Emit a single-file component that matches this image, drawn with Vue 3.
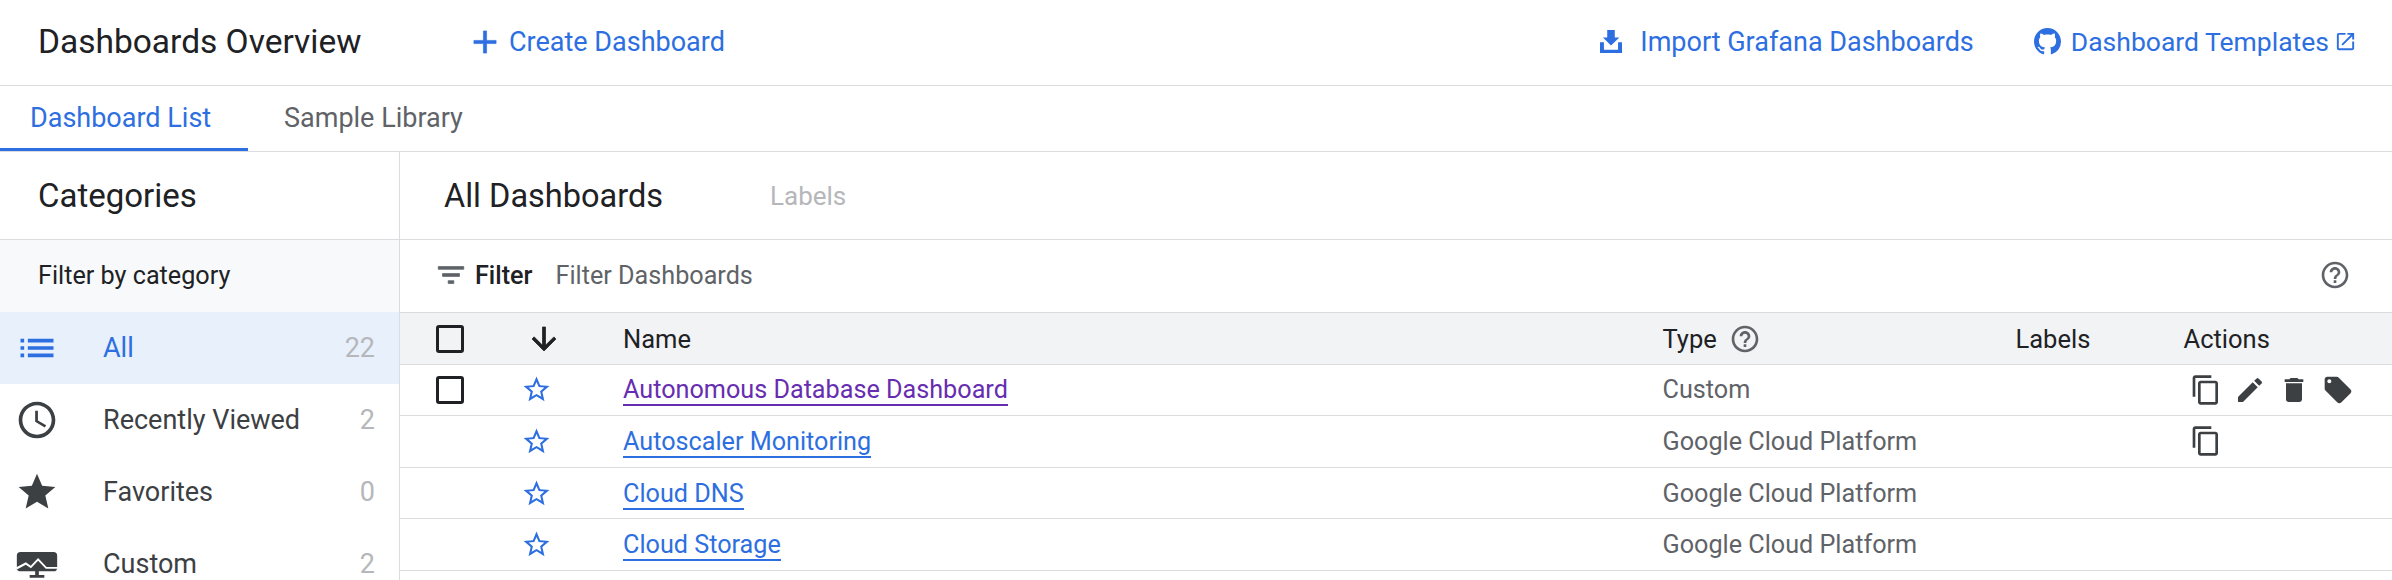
<template>
  <div class="page">
    <header class="top-bar">
      <h1 class="page-title">Dashboards Overview</h1>
      <a class="top-link create-link">
        <svg class="icon-plus" viewBox="0 0 24 24"><path d="M19 13h-6v6h-2v-6H5v-2h6V5h2v6h6v2z" /></svg>
        Create Dashboard
      </a>
      <a class="top-link import-link">
        <svg class="icon-import" viewBox="0 0 67 70"><path d="M0 37H12V60H55V37H67V70H0zM22 0H45V23H59L33.5 47 9 23H22z" /></svg>
        Import Grafana Dashboards
      </a>
      <a class="top-link templates-link">
        <svg class="icon-github" viewBox="0 0 16 16"><path d="M8 0C3.58 0 0 3.58 0 8c0 3.54 2.29 6.53 5.47 7.59.4.07.55-.17.55-.38 0-.19-.01-.82-.01-1.49-2.01.37-2.53-.49-2.69-.94-.09-.23-.48-.94-.82-1.13-.28-.15-.68-.52-.01-.53.63-.01 1.08.58 1.23.82.72 1.21 1.87.87 2.33.66.07-.52.28-.87.51-1.07-1.78-.2-3.64-.89-3.64-3.95 0-.87.31-1.59.82-2.15-.08-.2-.36-1.02.08-2.12 0 0 .67-.21 2.2.82.64-.18 1.32-.27 2-.27s1.36.09 2 .27c1.53-1.04 2.2-.82 2.2-.82.44 1.1.16 1.92.08 2.12.51.56.82 1.27.82 2.15 0 3.07-1.87 3.75-3.65 3.95.29.25.54.73.54 1.48 0 1.07-.01 1.93-.01 2.2 0 .21.15.46.55.38A8.01 8.01 0 0 0 16 8c0-4.42-3.58-8-8-8z" /></svg>
        Dashboard Templates
        <svg class="icon-external" viewBox="0 0 24 24"><path d="M19 19H5V5h7V3H5a2 2 0 0 0-2 2v14a2 2 0 0 0 2 2h14c1.1 0 2-.9 2-2v-7h-2v7zM14 3v2h3.59l-9.83 9.83 1.41 1.41L19 6.41V10h2V3h-7z" /></svg>
      </a>
    </header>

    <nav class="tabs">
      <div class="tab active">Dashboard List</div>
      <div class="tab">Sample Library</div>
    </nav>

    <div class="content">
      <aside class="sidebar">
        <div class="section-head"><h2>Categories</h2></div>
        <div class="filter-label">Filter by category</div>
        <div
          v-for="cat in categories"
          :key="cat.name"
          class="cat-item"
          :class="{ active: cat.active }"
        >
          <svg class="cat-icon" viewBox="0 0 24 24"><path :d="cat.icon" fill-rule="evenodd" /></svg>
          <span class="cat-name">{{ cat.name }}</span>
          <span class="cat-count">{{ cat.count }}</span>
        </div>
      </aside>

      <main class="main">
        <div class="section-head main-head">
          <h2>All Dashboards</h2>
          <span class="labels-tab">Labels</span>
        </div>

        <div class="filter-bar">
          <svg class="icon-filter" viewBox="0 0 24 24"><path d="M10 18h4v-2h-4v2zM3 6v2h18V6H3zm3 7h12v-2H6v2z" /></svg>
          <span class="filter-word">Filter</span>
          <span class="filter-placeholder">Filter Dashboards</span>
          <svg class="icon-help" viewBox="0 0 24 24"><path :d="helpPath" /></svg>
        </div>

        <div class="row head-row">
          <span class="check"></span>
          <svg class="icon-arrow" viewBox="0 0 24 24"><path d="M20 12l-1.41-1.41L13 16.17V4h-2v12.17l-5.58-5.59L4 12l8 8 8-8z" /></svg>
          <span class="col-name">Name</span>
          <span class="col-type">Type <svg class="icon-help small" viewBox="0 0 24 24"><path :d="helpPath" /></svg></span>
          <span class="col-labels">Labels</span>
          <span class="col-actions">Actions</span>
        </div>

        <div v-for="row in rows" :key="row.name" class="row">
          <span class="check" :class="{ hidden: !row.checkable }"></span>
          <svg class="icon-star" viewBox="0 0 24 24"><path d="M22 9.24l-7.19-.62L12 2 9.19 8.63 2 9.24l5.46 4.73L5.82 21 12 17.27 18.18 21l-1.63-7.03L22 9.24zM12 15.4l-3.76 2.27 1-4.28-3.32-2.88 4.38-.38L12 6.1l1.71 4.04 4.38.38-3.32 2.88 1 4.28L12 15.4z" /></svg>
          <span class="col-name"><a class="dash-link" :class="{ visited: row.visited }">{{ row.name }}</a></span>
          <span class="col-type type-text">{{ row.type }}</span>
          <span class="col-labels"></span>
          <span class="col-actions action-icons">
            <svg v-for="a in row.actions" :key="a" class="icon-action" viewBox="0 0 24 24"><path :d="actionPaths[a]" /></svg>
          </span>
        </div>
      </main>
    </div>
  </div>
</template>

<script setup>
const helpPath =
  'M11 18h2v-2h-2v2zm1-16C6.48 2 2 6.48 2 12s4.48 10 10 10 10-4.48 10-10S17.52 2 12 2zm0 18c-4.41 0-8-3.59-8-8s3.59-8 8-8 8 3.59 8 8-3.59 8-8 8zm0-14c-2.21 0-4 1.79-4 4h2c0-1.1.9-2 2-2s2 .9 2 2c0 2-3 1.75-3 5h2c0-2.25 3-2.5 3-5 0-2.21-1.79-4-4-4z'

const categories = [
  {
    name: 'All',
    count: 22,
    active: true,
    icon: 'M3 13h2v-2H3v2zm0 4h2v-2H3v2zm0-8h2V7H3v2zm4 4h14v-2H7v2zm0 4h14v-2H7v2zM7 7v2h14V7H7z'
  },
  {
    name: 'Recently Viewed',
    count: 2,
    icon: 'M11.99 2C6.47 2 2 6.48 2 12s4.47 10 9.99 10C17.52 22 22 17.52 22 12S17.52 2 11.99 2zM12 20c-4.42 0-8-3.58-8-8s3.58-8 8-8 8 3.58 8 8-3.58 8-8 8zm.5-13H11v6l5.25 3.15.75-1.23-4.5-2.67V7z'
  },
  {
    name: 'Favorites',
    count: 0,
    icon: 'M12 17.27L18.18 21l-1.64-7.03L22 9.24l-7.19-.61L12 2 9.19 8.63 2 9.24l5.46 4.73L5.82 21z'
  },
  {
    name: 'Custom',
    count: 2,
    // monitor with a chart line cut out of the screen
    icon: 'M3 5.4h18a2 2 0 0 1 2 2V14a2 2 0 0 1-2 2h-8v2h3v1.5H8V18h3v-2H3a2 2 0 0 1-2-2V7.4a2 2 0 0 1 2-2zM1 13.6 5.9 11l2.7 1.9 4-4.2 4.6 4.9H23v1h-6.2l-4.2-4.4-3.9 4.1-2.8-1.9L1 15z'
  }
]

const actionPaths = {
  copy: 'M16 1H4c-1.1 0-2 .9-2 2v14h2V3h12V1zm3 4H8c-1.1 0-2 .9-2 2v14c0 1.1.9 2 2 2h11c1.1 0 2-.9 2-2V7c0-1.1-.9-2-2-2zm0 16H8V7h11v14z',
  edit: 'M3 17.25V21h3.75L17.81 9.94l-3.75-3.75L3 17.25zM20.71 7.04c.39-.39.39-1.02 0-1.41l-2.34-2.34a.9959.9959 0 0 0-1.41 0l-1.83 1.83 3.75 3.75 1.83-1.83z',
  trash: 'M6 19c0 1.1.9 2 2 2h8c1.1 0 2-.9 2-2V7H6v12zM19 4h-3.5l-1-1h-5l-1 1H5v2h14V4z',
  tag: 'M21.41 11.58l-9-9C12.05 2.22 11.55 2 11 2H4c-1.1 0-2 .9-2 2v7c0 .55.22 1.05.59 1.42l9 9c.36.36.86.58 1.41.58s1.05-.22 1.41-.59l7-7c.37-.36.59-.86.59-1.41s-.23-1.06-.59-1.42zM5.5 7C4.67 7 4 6.33 4 5.5S4.67 4 5.5 4 7 4.67 7 5.5 6.33 7 5.5 7z'
}

const rows = [
  { name: 'Autonomous Database Dashboard', type: 'Custom', checkable: true, visited: true, actions: ['copy', 'edit', 'trash', 'tag'] },
  { name: 'Autoscaler Monitoring', type: 'Google Cloud Platform', actions: ['copy'] },
  { name: 'Cloud DNS', type: 'Google Cloud Platform', actions: [] },
  { name: 'Cloud Storage', type: 'Google Cloud Platform', actions: [] }
]
</script>

<style>
html, body {
  margin: 0;
  background: #fff;
  overflow: hidden;
}
</style>

<style scoped>
.page {
  width: 2392px;
  height: 580px;
  overflow: hidden;
  font-family: Roboto, "Liberation Sans", sans-serif;
  color: #202124;
  background: #fff;
}

.top-bar {
  height: 85px;
  box-sizing: content-box;
  display: flex;
  align-items: center;
  padding: 0 35px 0 38px;
  border-bottom: 1px solid #dadce0;
}

.page-title {
  margin: 0 0 2px;
  width: 428px;
  font-size: 33.5px;
  font-weight: 400;
}

.top-link {
  display: flex;
  align-items: center;
  margin-bottom: 2px;
  font-size: 27px;
  color: #2d6fe0;
  white-space: nowrap;
}

.top-link svg { fill: #2d6fe0; }

.create-link { margin-right: auto; gap: 5px; }
.icon-plus { width: 38px; height: 38px; stroke: #2d6fe0; stroke-width: 0.4; }
.import-link { gap: 18px; margin-right: 60px; }
.icon-import { width: 22px; height: 23px; }
.templates-link { gap: 10px; font-size: 26.5px; }
.icon-github { width: 27px; height: 27px; }
.icon-external { width: 23px; height: 23px; margin-left: -5px; }

.tabs {
  height: 65px;
  display: flex;
  border-bottom: 1px solid #dadce0;
}

.tab {
  width: 248px;
  box-sizing: border-box;
  height: 65px;
  line-height: 65px;
  padding-left: 30px;
  font-size: 27px;
  color: #5f6368;
}

.tab + .tab { padding-left: 36px; }

.tab.active {
  color: #2d6fe0;
  border-bottom: 3px solid #2d6fe0;
}

.content {
  display: flex;
  height: 428px;
}

.sidebar {
  width: 399px;
  flex-shrink: 0;
  border-right: 1px solid #dadce0;
}

.main { flex: 1; min-width: 0; }

.section-head {
  height: 88px;
  box-sizing: border-box;
  display: flex;
  align-items: center;
  padding-left: 38px;
  border-bottom: 1px solid #dadce0;
}

.section-head h2 {
  margin: 0;
  font-size: 33px;
  font-weight: 400;
}

.main-head { padding-left: 44px; }
.main-head h2 { width: 326px; font-size: 32.5px; }

.labels-tab {
  font-size: 26px;
  color: #b5b7ba;
}

.filter-label {
  height: 72px;
  box-sizing: border-box;
  display: flex;
  align-items: center;
  padding: 0 0 2px 38px;
  font-size: 25.2px;
  background: #f8f9fa;
}

.cat-item {
  height: 72px;
  display: flex;
  align-items: center;
  padding: 0 24px 0 15px;
  font-size: 27px;
  color: #3c4043;
}

.cat-item.active {
  background: #e8f0fc;
  color: #2d6fe0;
}

.cat-icon {
  width: 44px;
  height: 44px;
  fill: #3c4043;
  margin-right: 44px;
}

.cat-item.active .cat-icon { fill: #2d6fe0; }

.cat-name { flex: 1; }
.cat-count { color: #b5b7ba; }

.filter-bar {
  height: 72px;
  box-sizing: border-box;
  display: flex;
  align-items: center;
  padding: 0 41px 2px 34px;
  font-size: 25.2px;
}

.icon-filter { width: 34px; height: 34px; fill: #5f6368; stroke: #5f6368; stroke-width: 0.5; margin-right: 7px; }
.filter-word { font-weight: 500; margin-right: 23px; }
.filter-placeholder { color: #5f6368; flex: 1; }

.icon-help { width: 32px; height: 32px; fill: #5f6368; }
.icon-help.small { width: 32px; height: 32px; margin-left: 12px; }

.row {
  display: grid;
  grid-template-columns: 99px 88px 1039.5px 353px 168px 1fr;
  align-items: center;
  height: 51.67px;
  box-sizing: border-box;
  padding-left: 36px;
  border-bottom: 1px solid #dadce0;
  font-size: 25.2px;
}

.head-row {
  background: #f1f3f4;
  border-top: 1px solid #dadce0;
  height: 52.5px;
  padding-top: 1.5px;
  font-size: 25.5px;
}

.check {
  width: 28px;
  height: 28px;
  box-sizing: border-box;
  border: 3px solid #202124;
  border-radius: 3px;
}

.check.hidden { visibility: hidden; }

.icon-arrow { width: 36px; height: 36px; fill: #202124; stroke: #202124; stroke-width: 0.5; margin-left: -9px; }
.icon-star { width: 31px; height: 31px; fill: #2d6fe0; margin-left: -14.5px; }

.col-type { display: flex; align-items: center; }
.type-text { color: #5f6368; }

.dash-link {
  color: #2d6fe0;
  border-bottom: 2px solid #2d6fe0;
}

.dash-link.visited {
  color: #672db0;
  border-bottom-color: #672db0;
}

.action-icons { display: flex; gap: 12px; margin-left: 6px; }
.icon-action { width: 32px; height: 32px; fill: #3c4043; }
</style>
